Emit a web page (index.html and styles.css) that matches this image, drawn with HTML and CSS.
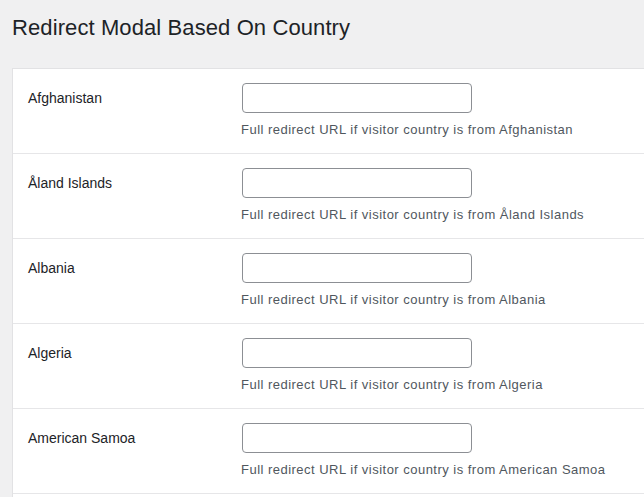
FILE: index.html
```html
<!DOCTYPE html>
<html>
<head>
<meta charset="utf-8">
<link rel="stylesheet" href="styles.css">
</head>
<body>
<div class="wrap">
  <h1 class="title">Redirect Modal Based On Country</h1>
  <div class="card">
    <div class="row">
      <div class="label">Afghanistan</div>
      <div class="field">
        <input class="input" type="text">
        <p class="desc">Full redirect URL if visitor country is from Afghanistan</p>
      </div>
    </div>
    <div class="row">
      <div class="label">Åland Islands</div>
      <div class="field">
        <input class="input" type="text">
        <p class="desc">Full redirect URL if visitor country is from Åland Islands</p>
      </div>
    </div>
    <div class="row">
      <div class="label">Albania</div>
      <div class="field">
        <input class="input" type="text">
        <p class="desc">Full redirect URL if visitor country is from Albania</p>
      </div>
    </div>
    <div class="row">
      <div class="label">Algeria</div>
      <div class="field">
        <input class="input" type="text">
        <p class="desc">Full redirect URL if visitor country is from Algeria</p>
      </div>
    </div>
    <div class="row">
      <div class="label">American Samoa</div>
      <div class="field">
        <input class="input" type="text">
        <p class="desc">Full redirect URL if visitor country is from American Samoa</p>
      </div>
    </div>
  </div>
</div>
</body>
</html>
```
FILE: styles.css
```css
html, body {
  margin: 0;
  padding: 0;
  background: #f0f0f1;
  overflow: hidden;
}
body {
  font-family: "Liberation Sans", Arial, sans-serif;
  color: #1d2327;
}
.wrap {
  padding: 0 0 0 12px;
}
.title {
  margin: 0;
  padding: 13px 0 0 0;
  height: 68px;
  box-sizing: border-box;
  font-size: 22px;
  font-weight: 400;
  letter-spacing: 0.1px;
  line-height: 29px;
  color: #1d2327;
}
.card {
  background: #fff;
  border-top: 1px solid #e2e2e4;
  border-left: 1px solid #e2e2e4;
  width: 700px;
  padding-bottom: 20px;
}
.row {
  display: flex;
  height: 85px;
  box-sizing: border-box;
  border-bottom: 1px solid #e6e6e8;
  padding-top: 14px;
}
.label {
  width: 214px;
  padding-left: 15px;
  font-size: 14px;
  line-height: 30px;
  color: #1d2327;
}
.field {
  display: flex;
  flex-direction: column;
}
.input {
  width: 230px;
  height: 30px;
  box-sizing: border-box;
  margin: 0;
  border: 1px solid #8c8f94;
  border-radius: 4px;
  background: #fff;
  padding: 0 8px;
}
.desc {
  margin: 7px 0 0 -1px;
  font-size: 13px;
  letter-spacing: 0.48px;
  line-height: 19px;
  color: #50575e;
}
```
